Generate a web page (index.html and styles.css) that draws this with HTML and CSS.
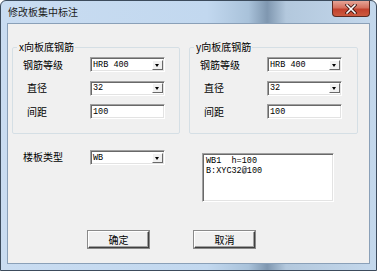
FILE: index.html
```html
<!DOCTYPE html>
<html lang="zh">
<head>
  <meta charset="UTF-8">
  <title>修改板集中标注</title>
  <link rel="stylesheet" href="styles.css">
</head>
<body>
  <div class="window">
    <div class="titlebar">
      <span class="title">修改板集中标注</span>
      <span class="close-btn">
        <svg width="12" height="10" viewBox="0 0 12 10">
          <path d="M2 1 L10 9 M10 1 L2 9" stroke="#3a1410" stroke-width="3.2" stroke-linecap="square"/>
          <path d="M2 1 L10 9 M10 1 L2 9" stroke="#fff" stroke-width="1.6" stroke-linecap="square"/>
        </svg>
      </span>
    </div>

    <div class="client">
      <div class="groups">
        <fieldset class="group">
          <legend>x向板底钢筋</legend>
          <div class="field-grid">
            <label class="lbl">钢筋等级</label>
            <div class="combo"><span class="val">HRB 400</span><span class="drop"></span></div>
            <label class="lbl indent">直径</label>
            <div class="combo"><span class="val">32</span><span class="drop"></span></div>
            <label class="lbl indent">间距</label>
            <div class="edit"><span class="val">100</span></div>
          </div>
        </fieldset>

        <fieldset class="group group-y">
          <legend>y向板底钢筋</legend>
          <div class="field-grid">
            <label class="lbl">钢筋等级</label>
            <div class="combo"><span class="val">HRB 400</span><span class="drop"></span></div>
            <label class="lbl indent">直径</label>
            <div class="combo"><span class="val">32</span><span class="drop"></span></div>
            <label class="lbl indent">间距</label>
            <div class="edit"><span class="val">100</span></div>
          </div>
        </fieldset>
      </div>

      <div class="middle">
        <div class="slab-type">
          <label class="lbl">楼板类型</label>
          <div class="combo"><span class="val">WB</span><span class="drop"></span></div>
        </div>
        <div class="preview">WB1  h=100
B:XYC32@100</div>
      </div>

      <div class="buttons">
        <button class="btn">确定</button>
        <button class="btn">取消</button>
      </div>
    </div>
  </div>
</body>
</html>
```

FILE: styles.css
```css
body {
  margin: 0;
  width: 377px;
  height: 271px;
  overflow: hidden;
  background: #ffffff;
  font-family: "Noto Sans CJK SC", "Liberation Sans", sans-serif;
}

.window {
  box-sizing: border-box;
  width: 377px;
  height: 271px;
  border: 1px solid #3c4b5c;
  border-radius: 6px 6px 0 0;
  padding: 0 6px 6px;
  background: linear-gradient(90deg, #c9dcf1 0%, #c2d8ef 55%, #a9c2da 66%, #7f97b0 71%, #b3c8dd 76%, #c4d8ec 100%);
  display: flex;
  flex-direction: column;
}

.titlebar {
  height: 22px;
  display: flex;
  justify-content: space-between;
  align-items: flex-start;
}

.title {
  font-size: 10px;
  line-height: 12px;
  color: #1b1b1b;
  padding: 5px 0 0 1px;
}

.close-btn {
  width: 38px;
  height: 16px;
  box-sizing: border-box;
  border: 1px solid #5b2a22;
  border-top: none;
  border-radius: 0 0 4px 4px;
  background: linear-gradient(180deg, #e5a496 0%, #d4715f 45%, #c2412d 55%, #cc5a3f 100%);
  display: flex;
  align-items: center;
  justify-content: center;
}

.client {
  flex: 1;
  border: 1px solid #8aa0b8;
  background: #f0f0f0;
  font-size: 10px;
  color: #000;
}

.groups {
  display: flex;
  gap: 9px;
  padding: 17px 0 0 4px;
}

.group {
  box-sizing: border-box;
  width: 168px;
  height: 93px;
  margin: 0;
  padding: 4px 0 0;
  border: 1px solid #d5dfe5;
  border-radius: 2px;
}

.group-y {
  width: 169px;
}

.group legend {
  font-size: 10px;
  line-height: 12px;
  padding: 0 1px 0 2px;
  margin-left: 4px;
}

.field-grid {
  display: grid;
  grid-template-columns: 77px 75px;
  row-gap: 8.5px;
  align-items: center;
}

.lbl {
  padding-left: 10px;
  line-height: 12px;
  font-size: 10px;
}

.lbl.indent {
  padding-left: 14px;
}

.combo, .edit {
  box-sizing: border-box;
  width: 75px;
  height: 15px;
  background: #fff;
  border: 1px solid;
  border-color: #a0a0a0 #ffffff #ffffff #a0a0a0;
  box-shadow: inset 1px 1px 0 #696969, inset -1px -1px 0 #e3e3e3;
  display: flex;
  align-items: center;
  justify-content: space-between;
  padding: 0 1px 0 2px;
}

.val {
  font-family: "Liberation Mono", monospace;
  font-size: 8.5px;
  line-height: 10px;
  white-space: pre;
}

.drop {
  width: 11px;
  height: 10px;
  box-sizing: border-box;
  background: #f0f0f0;
  border: 1px solid;
  border-color: #ffffff #696969 #696969 #ffffff;
  position: relative;
}

.drop::after {
  content: "";
  position: absolute;
  left: 2px;
  top: 3px;
  border-left: 2.5px solid transparent;
  border-right: 2.5px solid transparent;
  border-top: 3px solid #000;
}

.middle {
  display: flex;
  padding-top: 16px;
}

.slab-type {
  width: 194px;
  display: flex;
  align-items: flex-start;
}

.slab-type .lbl {
  width: 82px;
  padding-left: 15px;
  box-sizing: border-box;
  padding-top: 1px;
}

.preview {
  box-sizing: border-box;
  margin-top: 3px;
  width: 132px;
  height: 49px;
  background: #fff;
  border: 1px solid;
  border-color: #a0a0a0 #ffffff #ffffff #a0a0a0;
  box-shadow: inset 1px 1px 0 #696969, inset -1px -1px 0 #e3e3e3;
  padding: 2px 3px;
  font-family: "Liberation Mono", monospace;
  font-size: 8.5px;
  line-height: 10px;
  white-space: pre;
}

.buttons {
  display: flex;
  gap: 45px;
  padding: 29px 0 0 80px;
}

.btn {
  box-sizing: border-box;
  width: 61px;
  height: 17px;
  padding: 0;
  background: #f0f0f0;
  border: 1px solid;
  border-color: #ffffff #404040 #404040 #ffffff;
  box-shadow: inset -1px -1px 0 #a0a0a0, 0 0 0 1px #8a8a8a;
  font-family: "Noto Sans CJK SC", sans-serif;
  font-size: 10px;
  line-height: 12px;
  color: #000;
}
```
